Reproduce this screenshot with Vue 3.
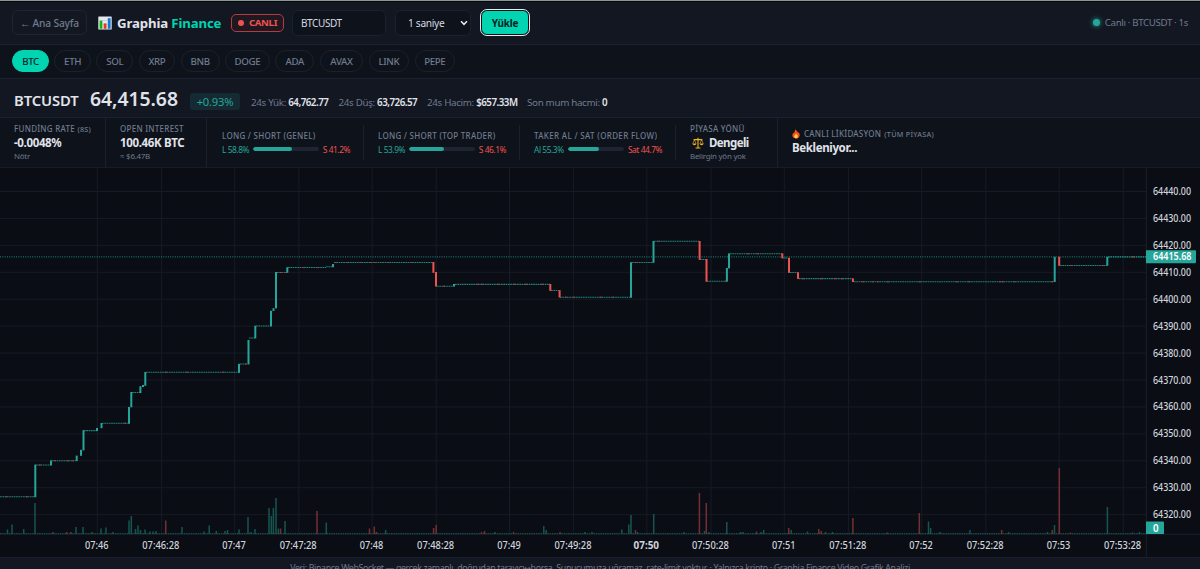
<script setup>
const coins = ['BTC', 'ETH', 'SOL', 'XRP', 'BNB', 'DOGE', 'ADA', 'AVAX', 'LINK', 'PEPE']

const stats = [
  ['24s Yük:', '64,762.77', 'w1'],
  ['24s Düş:', '63,726.57', 'w2'],
  ['24s Hacim:', '$657.33M', 'w3'],
  ['Son mum hacmi:', '0', 'w4'],
]

const gauges = [
  { title: 'LONG / SHORT (GENEL)', l: 'L 58.8%', s: 'S 41.2%', v: 58.8, cls: 'g1' },
  { title: 'LONG / SHORT (TOP TRADER)', l: 'L 53.9%', s: 'S 46.1%', v: 53.9, cls: 'g2' },
  { title: 'TAKER AL / SAT (ORDER FLOW)', l: 'Al 55.3%', s: 'Sat 44.7%', v: 55.3, cls: 'g3' },
]

const priceTicks = Array.from({ length: 13 }, (_, i) => ({
  label: (64440 - i * 10).toFixed(2),
  y: 191.5 + i * 26.93,
}))

const timeTicks = [
  '07:46', '07:46:28', '07:47', '07:47:28', '07:48', '07:48:28', '07:49', '07:49:28',
  '07:50', '07:50:28', '07:51', '07:51:28', '07:52', '07:52:28', '07:53', '07:53:28',
].map((label, i) => ({
  label,
  x: 97.3 + Math.floor(i / 2) * 137.4 + (i % 2) * 64.1,
  w: label === '07:50' ? 25.5 : label.length > 5 ? 37 : 23.5,
  bold: label === '07:50',
}))

// quiet seconds: [x1, x2, y]
const flats = [
  [0, 35, 496.7], [36, 51, 465], [52, 76, 460.7], [84, 97, 430.6], [102, 129, 423.3],
  [132, 140, 392.5], [146, 239, 372.3], [240, 247, 364], [249, 255, 338], [256, 271, 326],
  [277, 287, 272.5], [288, 326, 267.5], [326, 332, 266.8], [334, 433, 262.5], [437, 453, 286.2],
  [455, 550, 284.4], [551, 559, 290.5], [560, 630, 297.3], [632, 653, 262.5], [654, 699, 241.3],
  [700, 706, 259.5], [707, 726, 281.3], [730, 782, 253.7], [783, 788, 258], [790, 797, 272.5],
  [799, 852, 278.6], [854, 1054, 281.7], [1060, 1107, 265.5], [1108, 1146, 256.9],
]

// falling ticks inside the quiet seconds: [x, y]
const dips = [
  [5, 496.7], [26, 496.7], [39, 465], [54, 460.7], [67, 460.7], [72, 460.7], [124, 423.3],
  [165, 372.3], [186, 372.3], [222, 372.3], [245, 364], [281, 272.5], [284, 272.5],
  [302, 267.5], [317, 267.5], [335, 262.5], [346, 262.5], [360, 262.5], [370, 262.5],
  [375, 262.5], [387, 262.5], [410, 262.5], [443, 286.2], [477, 284.4], [482, 284.4],
  [498, 284.4], [513, 284.4], [525, 284.4], [541, 284.4], [565, 297.3], [573, 297.3],
  [600, 297.3], [612, 297.3], [635, 262.5], [658, 241.3], [725, 281.3], [747, 253.7],
  [757, 253.7], [803, 278.6], [820, 278.6], [834, 278.6], [841, 278.6], [862, 281.7],
  [872, 281.7], [877, 281.7], [887, 281.7], [919, 281.7], [956, 281.7], [968, 281.7],
  [999, 281.7], [1002, 281.7], [1013, 281.7], [1051, 281.7], [1071, 265.5], [1102, 265.5],
  [1132, 256.9],
]

// moves: [x, top, bottom, falling]
const candles = [
  [35.3, 464.6, 497.2], [51, 460.4, 465.4], [76.7, 455.6, 461], [81, 449.8, 455.8],
  [83.5, 430.2, 450.4], [97, 428, 431], [101.5, 423, 428.2], [129, 407, 423.7],
  [131.3, 392, 407.3], [140.4, 386.2, 393], [143, 385, 387], [145.3, 372, 385.8],
  [239, 363.8, 372.8], [248.5, 340, 364.4], [255.3, 325.7, 338.4], [271, 310.8, 326.4],
  [273.5, 308.2, 311], [276, 272, 308.4], [287.3, 267.2, 272.8], [333, 264, 267.2],
  [433.4, 262, 272.8, 1], [436, 272, 286.5, 1], [454, 284, 286.6], [550.3, 284, 290.8, 1],
  [559.6, 290.2, 297.5, 1], [631, 262.2, 297.7], [653.5, 241, 262.8], [699.6, 241, 259.8, 1],
  [706.5, 259, 281.7, 1], [726.9, 268, 281.6], [729, 253.4, 268.4], [782.3, 253.4, 258.3, 1],
  [789, 257.8, 272.8, 1], [798, 272.2, 278.9, 1], [852.9, 278.3, 282, 1],
  [1054.7, 256.8, 282], [1059.2, 256.8, 265.8, 1], [1107.3, 256.8, 265.8],
]

// volume: [x, height, falling]
const volumes = [
  [7.5, 4.5], [12, 9.5], [23.7, 5], [35, 31], [53, 2, 1], [66.7, 2, 1], [71, 2, 1], [76, 7],
  [83, 7], [92, 2], [101, 5.5], [106, 6.5], [113, 2], [129, 13.5], [131.3, 18], [135.5, 5],
  [138, 8.5], [140.5, 4], [145, 4.5], [150, 2.5], [153, 2.5], [156, 3], [165.7, 13.5, 1],
  [182, 7], [204, 2.5], [209.2, 8.5], [216.3, 3], [225, 3], [227.5, 4], [239, 4.5], [248, 17],
  [251, 2], [255, 5], [269, 26], [271.3, 18], [273.4, 26], [276, 36], [278.4, 5.5],
  [280.6, 5.5, 1], [285, 13], [317, 23, 1], [326.3, 11.5], [369.5, 5.5, 1], [374.3, 7.5, 1],
  [376.5, 2, 1], [385.7, 4], [433.6, 6, 1], [436.2, 9, 1], [481.5, 2, 1], [484.5, 3, 1],
  [495, 2], [513.5, 2, 1], [543.8, 8], [546.2, 4], [560, 2, 1], [585, 2], [592, 2],
  [621.8, 4.5], [628.8, 9.5], [631, 19], [635.5, 4, 1], [637.5, 2], [653.7, 20],
  [684, 2], [699.4, 41, 1], [704.5, 3], [706.3, 31, 1], [709, 2], [726.8, 12], [740.5, 2],
  [743, 2], [756.5, 2.5, 1], [761, 2], [763.7, 4], [788.7, 6, 1], [791.2, 4], [807.5, 2.5],
  [818.8, 5, 1], [821.2, 3, 1], [825.5, 2], [832.5, 2], [852.9, 16, 1], [887.5, 1.5, 1],
  [919.3, 21, 1], [928.5, 12.5], [930.6, 6], [940, 2], [969.9, 4], [1001.7, 4, 1],
  [1008.6, 2], [1047.5, 2], [1052.3, 4, 1], [1054.5, 9], [1059.3, 66, 1], [1107.4, 27],
  [1070.5, 1.5, 1], [1132.5, 1.5, 1], [1139.5, 2],
]
</script>

<template>
  <div class="page">
    <header class="top">
      <a class="back">← Ana Sayfa</a>
      <div class="brand">
        <svg class="logo" viewBox="0 0 14 14">
          <rect x="0.3" y="0.5" width="13.4" height="13" rx="0.6" fill="#e4e8ee" />
          <path d="M0.5 4.5H13.5M0.5 8.5H13.5" stroke="#bcc5d0" stroke-width=".5" />
          <rect x="1.6" y="4.6" width="2.8" height="8.2" fill="#13b413" />
          <rect x="5.7" y="7.4" width="2.8" height="5.4" fill="#e83a22" />
          <rect x="9.8" y="2.2" width="2.8" height="10.6" fill="#1478d4" />
        </svg>
        <span class="name">Graphia <em>Finance</em></span>
      </div>
      <span class="live"><i></i>CANLI</span>
      <div class="field symbol">BTCUSDT</div>
      <div class="field interval">
        <span>1 saniye</span>
        <svg viewBox="0 0 8 6"><path d="M1 1.2L4 4.3L7 1.2" fill="none" stroke="#e8eaf0" stroke-width="1.5" /></svg>
      </div>
      <button class="load">Yükle</button>
      <div class="status"><i></i>Canlı · BTCUSDT · 1s</div>
    </header>

    <nav class="coins">
      <span v-for="(c, i) in coins" :key="c" :class="['coin', { active: i === 0 }]">{{ c }}</span>
    </nav>

    <section class="ticker">
      <strong class="pair">BTCUSDT</strong>
      <strong class="price">64,415.68</strong>
      <span class="change">+0.93%</span>
      <span v-for="s in stats" :key="s[0]" :class="['stat', s[2]]">{{ s[0] }} <b>{{ s[1] }}</b></span>
    </section>

    <section class="metrics">
      <div class="cell line">
        <h4>FUNDİNG RATE <small>(8S)</small></h4>
        <strong>-0.0048%</strong>
        <p>Nötr</p>
      </div>
      <div class="cell line">
        <h4>OPEN INTEREST</h4>
        <strong>100.46K BTC</strong>
        <p>≈ $6.47B</p>
      </div>
      <div v-for="g in gauges" :key="g.cls" :class="['gauge', g.cls]">
        <h4>{{ g.title }}</h4>
        <div class="row">
          <span class="up">{{ g.l }}</span>
          <div class="track"><div class="fill" :style="{ width: g.v + '%' }"></div></div>
          <span class="down">{{ g.s }}</span>
        </div>
      </div>
      <div class="cell line dir">
        <h4>PİYASA YÖNÜ</h4>
        <strong>
          <svg class="scale" viewBox="0 0 12 12">
            <g fill="none" stroke="#f0b323" stroke-width=".9">
              <path d="M6 .8V10.6M1.6 2.6H10.4M3.6 11H8.4" stroke-width="1.1" />
              <path d="M2.4 2.8L.8 6.6M2.4 2.8L4 6.6M9.6 2.8L8 6.6M9.6 2.8L11.2 6.6" stroke-width=".6" />
            </g>
            <path d="M.3 6.5H4.5Q4 8.3 2.4 8.3T.3 6.5ZM7.5 6.5H11.7Q11.2 8.3 9.6 8.3T7.5 6.5Z" fill="#f0b323" />
          </svg>
          Dengeli
        </strong>
        <p>Belirgin yön yok</p>
      </div>
      <div class="cell liq">
        <h4>
          <svg class="fire" viewBox="0 0 8 10">
            <path d="M3.8.2C4.2 2 6 2.6 6.3 4.1L6.8 3.2C8 5 8 7.2 6.8 8.6C5.3 10.2 2.5 10.2 1.2 8.6C-.1 7 .4 4.8 1.4 3.6L2 4.6C2.6 3 2.6 1.6 3.8.2Z" fill="#f4511e" />
            <path d="M4 4.4C4.6 5.6 6 6.2 5.8 7.8C5.5 9.6 2.6 9.7 2.2 7.8C2 6.6 3.5 6 4 4.4Z" fill="#ffd23c" />
          </svg>
          CANLI LİKİDASYON <small>(TÜM PİYASA)</small>
        </h4>
        <strong>Bekleniyor...</strong>
      </div>
    </section>

    <svg class="chart" viewBox="0 168 1200 389">
      <g class="grid">
        <path v-for="t in priceTicks" :key="t.label" :d="`M0 ${t.y}H1146`" />
        <path v-for="t in timeTicks" :key="t.label" :d="`M${t.x} 168V534`" />
      </g>
      <path d="M1146.3 168V557M0 534.3H1200" class="axis" />

      <path d="M0 533.6H1146" class="base" />
      <rect
        v-for="(v, i) in volumes" :key="'v' + i" :x="v[0] - 0.75" :y="534 - v[1]"
        width="1.5" :height="v[1]" :class="v[2] ? 'vdown' : 'vup'"
      />

      <path d="M0 256.9H1146" class="last" />
      <path v-for="(f, i) in flats" :key="'f' + i" :d="`M${f[0]} ${f[2]}H${f[1]}`" class="flat" />
      <path v-for="(d, i) in dips" :key="'d' + i" :d="`M${d[0]} ${d[1]}h2`" class="dip" />
      <rect
        v-for="(c, i) in candles" :key="'c' + i" :x="c[0] - 1" :y="c[1]"
        width="2" :height="c[2] - c[1]" :class="c[3] ? 'cdown' : 'cup'"
      />

      <g class="labels">
        <text
          v-for="t in priceTicks" :key="t.label" x="1153" :y="t.y + 3.5"
          textLength="38" lengthAdjust="spacingAndGlyphs"
        >{{ t.label }}</text>
        <text
          v-for="t in timeTicks" :key="t.label" :x="t.x - t.w / 2 - 0.6" y="548.6"
          :textLength="t.w" lengthAdjust="spacingAndGlyphs" :class="{ bold: t.bold }"
        >{{ t.label }}</text>
      </g>
      <path d="M1146 250.3H1195a1 1 0 0 1 1 1V262.3a1 1 0 0 1 -1 1H1146Z" class="tag" />
      <text x="1153" y="260.4" textLength="38.5" lengthAdjust="spacingAndGlyphs" class="tagtext">64415.68</text>
      <path d="M1146 521.6H1163a1 1 0 0 1 1 1V534H1146Z" class="tag" />
      <text x="1153" y="531.5" class="tagtext">0</text>
    </svg>

    <footer class="foot">
      <span>Veri: Binance WebSocket — gerçek zamanlı, doğrudan tarayıcı<i>↔</i>borsa. Sunucumuza uğramaz, rate-limit yoktur. · Yalnızca kripto · Graphia Finance Video Grafik Analizi</span>
    </footer>
  </div>
</template>

<style>
body { background: #0a0d14; overflow: hidden; }
</style>

<style scoped>
.page {
  width: 1200px; height: 569px; box-sizing: border-box; overflow: hidden;
  display: flex; flex-direction: column;
  border-top: 1px solid #8b9796;
  background: #0a0d14; color: #e0e3ea;
  font-family: "Noto Sans", "Open Sans", sans-serif; font-size: 9.6px;
}
.page * { box-sizing: border-box; }
h4, p { margin: 0; }

.top {
  flex: 0 0 43.5px; display: flex; align-items: center; padding: 0 12px;
  background: #131722; border-bottom: 1px solid #1b2030; border-top: 1px solid #05070b;
}
.back {
  width: 75px; height: 25px; border: 1px solid #1e2433; border-radius: 6px;
  display: flex; align-items: center; justify-content: center;
  color: #6f7b8e; font-size: 10.2px; font-weight: 500; letter-spacing: -.15px; white-space: nowrap;
}
.brand { display: flex; align-items: center; margin-left: 11px; width: 133px; }
.logo { width: 14px; height: 14px; margin-right: 5px; }
.name { font-size: 13.2px; font-weight: 700; letter-spacing: -.12px; white-space: nowrap; }
.name em { font-style: normal; color: #00d4b1; }
.live {
  width: 53px; height: 18px; border: 1px solid #b23c42; border-radius: 5px;
  background: #1f1821; color: #ef5350; font-size: 9.6px; font-weight: 700; letter-spacing: -.3px;
  display: flex; align-items: center; justify-content: center;
}
.live i { width: 6px; height: 6px; border-radius: 50%; background: #ef5350; margin-right: 5px; }
.field {
  height: 26px; background: #0e121a; border: 1px solid #1b202d; border-radius: 6px;
  display: flex; align-items: center; color: #d5d9e2; letter-spacing: -.2px;
}
.symbol { width: 94px; margin-left: 8px; padding-left: 8px; font-size: 10px; letter-spacing: -.4px; }
.interval { width: 76px; margin-left: 9px; padding: 0 2px 0 12px; justify-content: space-between; font-size: 10.2px; }
.interval span { letter-spacing: -.32px; }
.interval svg { width: 8px; height: 6px; }
.load {
  width: 48px; height: 25px; margin-left: 10px; padding: 0; border: 1px solid #0a0d14;
  border-radius: 6px; outline: 1.5px solid #e6eaee; outline-offset: 0; background: #00d4b1;
  color: #06231f; font: 700 10px "Noto Sans", sans-serif; letter-spacing: -.25px;
}
.status { margin-left: auto; display: flex; align-items: center; color: #6f7b8e; font-size: 9.7px; letter-spacing: -.35px; }
.status i { width: 7px; height: 7px; border-radius: 50%; background: #26a69a; box-shadow: 0 0 5px #26a69a; margin-right: 5px; }

.coins {
  flex: 0 0 34.5px; display: grid; align-items: center; column-gap: 5.4px; padding-left: 12px;
  grid-template-columns: 37px 36.5px 37px 36.5px 39px 45px 39px 43.5px 40.5px 40.5px;
  background: #0e121a; border-bottom: 1px solid #1b2030;
}
.coin {
  height: 22px; border: 1px solid #1b202d; border-radius: 11px; color: #6f7b8e;
  display: flex; align-items: center; justify-content: center;
  font-size: 9.7px; font-weight: 500; letter-spacing: -.35px;
}
.coin.active { background: #00d4b1; border-color: #00d4b1; color: #06231f; }

.ticker {
  flex: 0 0 39px; display: flex; align-items: baseline; padding: 6px 0 0 14px;
  background: #131722; border-bottom: 1px solid #1b2030; white-space: nowrap;
}
.pair { width: 76px; font-size: 14.8px; font-weight: 600; letter-spacing: -.1px; }
.price { width: 100px; font-size: 19.4px; line-height: 28px; font-weight: 600; letter-spacing: -.05px; }
.change {
  width: 50px; height: 17px; line-height: 17px; border-radius: 3px; text-align: center;
  background: #152a32; color: #26a69a; font-size: 11.2px; letter-spacing: -.2px; margin-right: 11px;
}
.stat { color: #6f7b8e; font-size: 9.8px; letter-spacing: -.33px; }
.stat b { color: #e0e3ea; font-weight: 600; letter-spacing: -.5px; }
.w1 { width: 87.5px; }
.w2 { width: 88.5px; }
.w3 { width: 100px; }

.metrics {
  flex: 0 0 50px; display: grid; grid-template-columns: 106px 101px 157px 156px 156px 102px 1fr;
  background: #0e121a; border-bottom: 1px solid #161b27; white-space: nowrap;
}
.cell { padding: 5px 0 0 14px; }
.line { border-right: 1px solid #1b2030; }
h4 { color: #6f7b8e; font-size: 8px; line-height: 12px; font-weight: 500; letter-spacing: .27px; }
.g3 h4 { letter-spacing: .34px; }
h4 small { font-size: 7.2px; }
.cell strong { display: flex; align-items: center; font-size: 11.5px; line-height: 15px; letter-spacing: -.35px; }
.cell p { color: #6f7b8e; font-size: 7.9px; line-height: 12px; letter-spacing: -.23px; }
.gauge { position: relative; padding: 12px 14px 0 14px; margin: 0; }
.gauge::after { content: ""; position: absolute; right: 0; top: 7px; width: 1px; height: 35px; background: #1b2030; }
.g1 { padding-left: 15px; }
.row { display: flex; align-items: center; gap: 4px; height: 14px; font-size: 8.4px; letter-spacing: -.45px; }
.up { color: #26a69a; }
.down { color: #ef5350; }
.track { flex: 1; height: 4px; border-radius: 2px; background: #1e2431; overflow: hidden; }
.fill { height: 100%; background: #26a69a; border-radius: 2px; }
.scale { width: 12px; height: 12px; margin: 0 5px 0 2px; }
.dir strong { letter-spacing: -.6px; }
.liq { padding-top: 10px; }
.liq h4 { display: flex; align-items: center; gap: 3px; }
.fire { width: 8px; height: 10px; margin-right: 1px; }

.chart { flex: 0 0 389px; width: 1200px; height: 389px; display: block; }
.grid { stroke: #161b26; stroke-width: 1; fill: none; }
.axis { stroke: #1b202d; stroke-width: 1; fill: none; }
.base { stroke: #175550; stroke-width: 1; stroke-dasharray: 1.5 .8; }
.last { stroke: #26a69a; stroke-width: 1; stroke-dasharray: 1 1.3; opacity: .85; }
.flat { stroke: #1f857b; stroke-width: 1.1; stroke-dasharray: 1.7 .6; }
.dip { stroke: #a83a3c; stroke-width: 1.1; }
.cup { fill: #26a69a; }
.cdown { fill: #ef5350; }
.vup { fill: #175550; }
.vdown { fill: #752f34; }
.labels { fill: #d1d4dc; font-size: 9.8px; font-weight: 500; }
.labels .bold { font-weight: 700; }
.tag { fill: #26a69a; }
.tagtext { fill: #fff; font-size: 9.8px; font-weight: 600; }

.foot {
  flex: 1; min-height: 0; background: #131722; border-top: 1px solid #1b2030;
  display: flex; justify-content: center; padding-top: 3.5px; overflow: hidden;
  color: #6f7b8e; font-size: 8.8px; line-height: 13px; letter-spacing: -.35px; white-space: nowrap;
}
.foot i { font: normal 8px/1 "DejaVu Sans", sans-serif; }
</style>
